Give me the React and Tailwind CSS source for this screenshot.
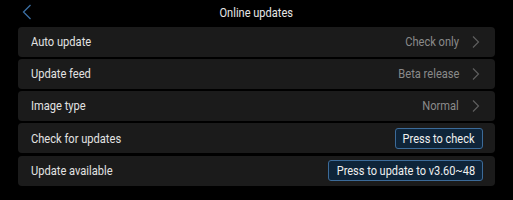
import React from 'react';

const Chevron = () => (
    <svg width="8" height="12" viewBox="0 0 8 12" fill="none" className="ml-[13px]">
        <path d="M1 0.5 L6.5 6 L1 11.5" stroke="#5e5e5e" strokeWidth="1.2" />
    </svg>
);

const rows = [
    { label: 'Auto update', value: 'Check only' },
    { label: 'Update feed', value: 'Beta release' },
    { label: 'Image type', value: 'Normal' },
    { label: 'Check for updates', button: 'Press to check', width: 'w-[88px]' },
    { label: 'Update available', button: 'Press to update to v3.60~48', width: 'w-[155px]' },
];

const App = () => {
    return (
        <div className="w-[513px] h-[200px] bg-black overflow-hidden font-['Roboto',sans-serif]">
            {/* Header */}
            <div className="relative h-[25px] flex items-center justify-center">
                <svg width="10" height="16" viewBox="0 0 10 16" fill="none" className="absolute left-[22px] top-[4px]">
                    <path d="M8.5 1 L1.5 8 L8.5 15" stroke="#3b6fa3" strokeWidth="1.3" />
                </svg>
                <span className="inline-block whitespace-nowrap scale-x-[0.85] text-[13px] text-[#e6e6e6]">Online updates</span>
            </div>

            {/* Settings list */}
            <div className="flex flex-col gap-[2.3px] px-[18px] pt-[1.5px]">
                {rows.map((row) => (
                    <div
                        key={row.label}
                        className="h-[30px] flex items-center justify-between rounded-[4px] bg-[#1b1b1b] pl-[13px] pr-[12px]"
                    >
                        <span className="inline-block whitespace-nowrap origin-left scale-x-[0.855] text-[13px] text-[#e2e2e2]">{row.label}</span>
                        {row.button ? (
                            <button className={`${row.width} h-[21px] flex items-center justify-center rounded-[3px] border border-[#3c6b99] bg-[#0e2439] text-[13px] text-[#f0f0f0] leading-none`}>
                                <span className="inline-block whitespace-nowrap scale-x-[0.845]">{row.button}</span>
                            </button>
                        ) : (
                            <div className="flex items-center pr-[3px]">
                                <span className="inline-block whitespace-nowrap origin-right scale-x-[0.855] text-[13px] text-[#8a8a8a]">{row.value}</span>
                                <Chevron />
                            </div>
                        )}
                    </div>
                ))}
            </div>
        </div>
    );
};

export default App;
